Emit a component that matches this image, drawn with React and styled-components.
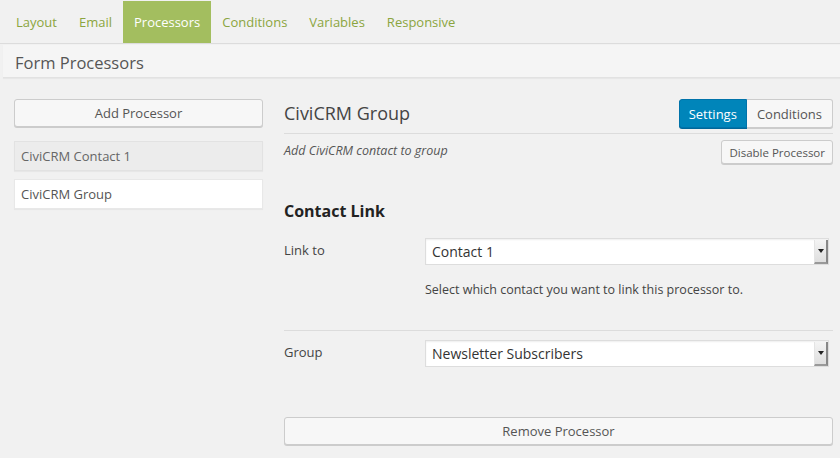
import React from 'react'
import styled, {createGlobalStyle} from 'styled-components'

const GlobalStyle = createGlobalStyle`
    html, body {
        margin: 0;
        padding: 0;
        background: #f1f1f1;
        font-family: "Open Sans", "Liberation Sans", sans-serif;
        color: #444;
    }
`

const Page = styled.div`
    width: 840px;
    height: 458px;
    overflow: hidden;
    background: #f1f1f1;
`

const NavBar = styled.nav`
    display: flex;
    height: 42px;
    padding-top: 1px;
    padding-left: 5px;
    background: #f1f1f1;
    border-bottom: 1px solid #dcdcdc;
`

const NavTab = styled.a`
    display: flex;
    align-items: center;
    padding: 0 11px;
    font-size: 13px;
    color: ${p => (p.active ? '#fff' : '#8ba540')};
    background: ${p => (p.active ? '#a3be5f' : 'transparent')};
    cursor: pointer;
`

const TitleBar = styled.div`
    margin: 1px 0 0 3px;
    height: 33px;
    display: flex;
    align-items: center;
    padding: 2px 0 0 12px;
    box-sizing: border-box;
    background: #f5f5f5;
    border-bottom: 1px solid #e2e2e2;
    box-shadow: 0 1px 1px rgba(0, 0, 0, 0.04);
    font-size: 16.5px;
    color: #555;
`

const Body = styled.div`
    display: flex;
    gap: 21px;
    padding: 21px 7px 0 14px;
`

const Sidebar = styled.div`
    width: 249px;
    display: flex;
    flex-direction: column;
`

const Button = styled.button`
    font-family: inherit;
    font-size: ${p => (p.small ? '11.5px' : '13px')};
    color: #555;
    background: #f7f7f7;
    border: 1px solid #ccc;
    border-radius: 3px;
    box-shadow: 0 1px 0 #ccc;
    height: ${p => (p.small ? '24px' : '28px')};
    padding: 0 ${p => (p.small ? '7px' : '8px')};
    cursor: pointer;
`

const WideButton = styled(Button)`
    width: 100%;
`

const ProcessorItem = styled.div`
    margin-top: ${p => (p.first ? '14px' : '8px')};
    height: 30px;
    display: flex;
    align-items: center;
    padding: 0 6px;
    font-size: 13px;
    color: ${p => (p.active ? '#555' : '#666')};
    background: ${p => (p.active ? '#fff' : '#ececec')};
    border: 1px solid ${p => (p.active ? '#e8e8e8' : '#e2e2e2')};
    box-shadow: 0 1px 1px rgba(0, 0, 0, 0.04);
    box-sizing: border-box;
`

const Main = styled.div`
    flex: 1;
    display: flex;
    flex-direction: column;
`

const MainHeader = styled.div`
    display: flex;
    justify-content: space-between;
    align-items: center;
    height: 34px;
    border-bottom: 1px solid #dcdcdc;
`

const MainTitle = styled.h2`
    margin: 0;
    font-size: 18px;
    font-weight: 400;
    color: #444;
    padding-bottom: 6px;
`

const ButtonGroup = styled.div`
    display: flex;
    align-self: flex-start;
`

const GroupButton = styled.button`
    font-family: inherit;
    font-size: 13px;
    height: 29px;
    padding: 0 ${p => (p.active ? '9px' : '10px')};
    cursor: pointer;
    color: ${p => (p.active ? '#fff' : '#555')};
    background: ${p => (p.active ? '#0085ba' : '#f7f7f7')};
    border: 1px solid ${p => (p.active ? '#0073aa' : '#ccc')};
    border-radius: ${p => (p.first ? '3px 0 0 3px' : '0 3px 3px 0')};
    box-shadow: 0 1px 0 ${p => (p.active ? '#006799' : '#ccc')};
    ${p => !p.first && 'border-left: none;'}
`

const DescRow = styled.div`
    display: flex;
    justify-content: space-between;
    align-items: flex-start;
    padding-top: 6px;
`

const Description = styled.em`
    font-size: 12.5px;
    color: #555;
    padding-top: 2px;
`

const SectionTitle = styled.h3`
    margin: 36px 0 0;
    font-size: 16px;
    font-weight: 700;
    color: #222;
`

const FieldRow = styled.div`
    display: grid;
    grid-template-columns: 141px 404px;
    align-items: start;
    padding-top: ${p => p.top || '0'};
`

const FieldLabel = styled.label`
    font-size: 13px;
    color: #444;
    padding-top: 3px;
`

const SelectBox = styled.div`
    position: relative;
    height: 27px;
    display: flex;
    align-items: center;
    padding-left: 6px;
    background: #fff;
    border: 1px solid #ddd;
    box-shadow: inset 0 1px 2px rgba(0, 0, 0, 0.07);
    box-sizing: border-box;
    font-size: 14px;
    color: #333;
`

const SelectArrow = styled.span`
    position: absolute;
    right: 0;
    top: 1px;
    bottom: 0;
    width: 11px;
    background: linear-gradient(#f4f4f4, #dedede);
    border-left: 1px solid #e4e4e4;
    border-right: 2px solid #888;
    border-bottom: 2px solid #999;
    display: flex;
    align-items: center;
    justify-content: center;

    &::after {
        content: '';
        border-left: 3px solid transparent;
        border-right: 3px solid transparent;
        border-top: 4px solid #222;
    }
`

const HelpText = styled.p`
    grid-column: 2;
    margin: 16px 0 0;
    font-size: 12.5px;
    color: #444;
`

const Divider = styled.hr`
    margin: 32px 0 9px;
    border: none;
    border-top: 1px solid #dcdcdc;
`

const Footer = styled.div`
    margin-top: 50px;
`

const Select = ({value}) => (
    <SelectBox>
        {value}
        <SelectArrow />
    </SelectBox>
)

const tabs = ['Layout', 'Email', 'Processors', 'Conditions', 'Variables', 'Responsive']

const App = () => {
    return (
        <Page>
            <GlobalStyle />
            <NavBar>
                {tabs.map(t => (
                    <NavTab key={t} active={t === 'Processors'}>{t}</NavTab>
                ))}
            </NavBar>
            <TitleBar>Form Processors</TitleBar>
            <Body>
                <Sidebar>
                    <WideButton>Add Processor</WideButton>
                    <ProcessorItem first>CiviCRM Contact 1</ProcessorItem>
                    <ProcessorItem active>CiviCRM Group</ProcessorItem>
                </Sidebar>
                <Main>
                    <MainHeader>
                        <MainTitle>CiviCRM Group</MainTitle>
                        <ButtonGroup>
                            <GroupButton active first>Settings</GroupButton>
                            <GroupButton>Conditions</GroupButton>
                        </ButtonGroup>
                    </MainHeader>
                    <DescRow>
                        <Description>Add CiviCRM contact to group</Description>
                        <Button small>Disable Processor</Button>
                    </DescRow>
                    <SectionTitle>Contact Link</SectionTitle>
                    <FieldRow top="16px">
                        <FieldLabel>Link to</FieldLabel>
                        <Select value="Contact 1" />
                        <HelpText>Select which contact you want to link this processor to.</HelpText>
                    </FieldRow>
                    <Divider />
                    <FieldRow>
                        <FieldLabel>Group</FieldLabel>
                        <Select value="Newsletter Subscribers" />
                    </FieldRow>
                    <Footer>
                        <WideButton>Remove Processor</WideButton>
                    </Footer>
                </Main>
            </Body>
        </Page>
    )
}

export default App
